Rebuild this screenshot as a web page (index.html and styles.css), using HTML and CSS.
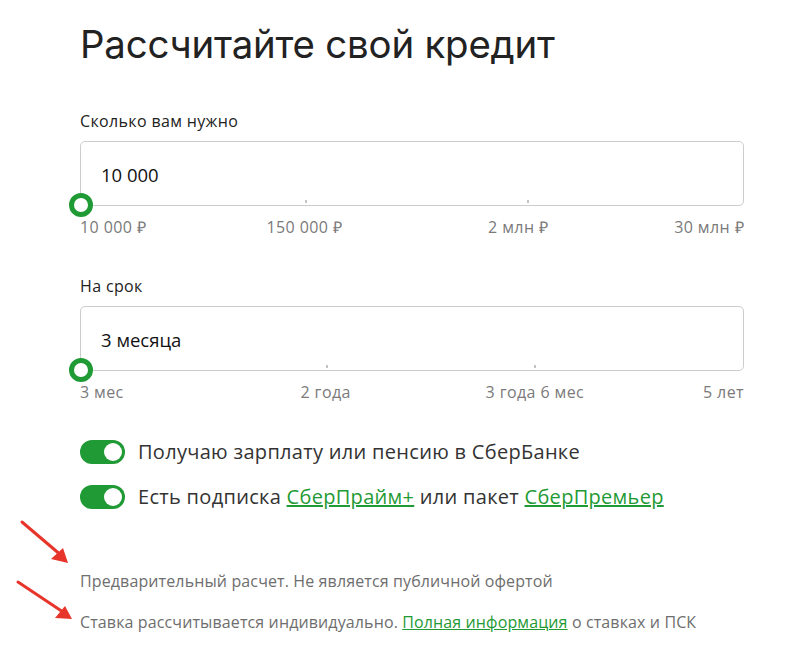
FILE: index.html
```html
<!DOCTYPE html>
<html lang="ru">
<head>
    <meta charset="UTF-8">
    <meta name="viewport" content="width=device-width, initial-scale=1.0">
    <title>Рассчитайте свой кредит</title>
    <link rel="stylesheet" href="styles.css">
</head>
<body>
    <div class="calc">
        <h1>Рассчитайте свой кредит</h1>

        <div class="field">
            <label class="field-label">Сколько вам нужно</label>
            <div class="box">
                <span class="value">10 000</span>
                <span class="tick" style="left: 33.8%"></span>
                <span class="tick" style="left: 67.4%"></span>
                <span class="thumb"></span>
            </div>
            <div class="scale">
                <span>10 000 ₽</span>
                <span class="stop" style="left: 33.8%">150 000 ₽</span>
                <span class="stop" style="left: 66%">2 млн ₽</span>
                <span>30 млн ₽</span>
            </div>
        </div>

        <div class="field">
            <label class="field-label">На срок</label>
            <div class="box">
                <span class="value">3 месяца</span>
                <span class="tick" style="left: 37%"></span>
                <span class="tick" style="left: 68.5%"></span>
                <span class="thumb"></span>
            </div>
            <div class="scale">
                <span>3 мес</span>
                <span class="stop" style="left: 37%">2 года</span>
                <span class="stop" style="left: 68.5%">3 года 6 мес</span>
                <span>5 лет</span>
            </div>
        </div>

        <div class="switches">
            <div class="switch-row">
                <span class="switch"></span>
                <span>Получаю зарплату или пенсию в СберБанке</span>
            </div>
            <div class="switch-row">
                <span class="switch"></span>
                <span>Есть подписка <a href="#">СберПрайм+</a> или пакет <a href="#">СберПремьер</a></span>
            </div>
        </div>

        <div class="notes">
            <p>Предварительный расчет. Не является публичной офертой</p>
            <p>Ставка рассчитывается индивидуально. <a href="#">Полная информация</a> о ставках и ПСК</p>
        </div>
    </div>

    <svg class="arrow arrow-1" width="60" height="50" viewBox="0 0 60 50">
        <path d="M4 4 L44 38" stroke="#e8352b" stroke-width="3" stroke-linecap="round"/>
        <path d="M50 45 L33 41 L45 30 Z" fill="#e8352b"/>
    </svg>
    <svg class="arrow arrow-2" width="70" height="50" viewBox="0 0 70 50">
        <path d="M4 4 L52 36" stroke="#e8352b" stroke-width="3" stroke-linecap="round"/>
        <path d="M58 41 L41 40 L51 28 Z" fill="#e8352b"/>
    </svg>
</body>
</html>
```

FILE: styles.css
```css
* {
    margin: 0;
    padding: 0;
    box-sizing: border-box;
}
body {
    background: #fff;
    font-family: "Open Sans", Arial, sans-serif;
    color: #333;
}
a {
    color: #1f9a35;
}
.calc {
    width: 664px;
    margin-left: 80px;
    padding-top: 16px;
}
h1 {
    font-family: Inter, sans-serif;
    font-weight: 400;
    font-size: 38.4px;
    line-height: 56px;
    color: #222;
    letter-spacing: -0.2px;
}
.field {
    margin-top: 39px;
}
.field + .field {
    margin-top: 39px;
}
.field-label {
    display: block;
    font-size: 16px;
    line-height: 20px;
    letter-spacing: 0.35px;
    color: #222;
    margin-bottom: 10px;
}
.box {
    position: relative;
    height: 65px;
    border: 1px solid #ccc;
    border-radius: 5px;
    display: flex;
    align-items: center;
    padding-left: 20px;
}
.value {
    font-size: 18.5px;
    color: #111;
    margin-top: 1px;
}
.tick {
    position: absolute;
    bottom: 2px;
    width: 2px;
    height: 3px;
    background: #c4c4c4;
}
.thumb {
    position: absolute;
    left: -12px;
    bottom: -12px;
    width: 24px;
    height: 24px;
    border-radius: 50%;
    border: 5px solid #1f9a35;
    background: #fff;
}
.scale {
    position: relative;
    display: flex;
    justify-content: space-between;
    margin-top: 11px;
    font-size: 16px;
    line-height: 20px;
    letter-spacing: 0.4px;
    color: #7a7a7a;
}
.scale .stop {
    position: absolute;
    top: 0;
    transform: translateX(-50%);
    white-space: nowrap;
}
.switches {
    margin-top: 38px;
    display: flex;
    flex-direction: column;
    gap: 21px;
}
.switch-row {
    display: flex;
    align-items: center;
    gap: 13px;
    font-size: 20px;
    line-height: 24px;
    letter-spacing: 0.3px;
    color: #333;
}
.switch {
    position: relative;
    width: 45px;
    height: 24px;
    border-radius: 12px;
    background: #1f9a35;
    flex-shrink: 0;
}
.switch::after {
    content: "";
    position: absolute;
    right: 3px;
    top: 3px;
    width: 18px;
    height: 18px;
    border-radius: 50%;
    background: #fff;
}
.notes {
    margin-top: 62px;
    font-size: 16px;
    line-height: 20px;
    letter-spacing: 0.12px;
    color: #6e6e6e;
}
.notes p + p {
    margin-top: 21px;
}
.arrow {
    position: absolute;
}
.arrow-1 {
    left: 18px;
    top: 518px;
}
.arrow-2 {
    left: 14px;
    top: 578px;
}
```
